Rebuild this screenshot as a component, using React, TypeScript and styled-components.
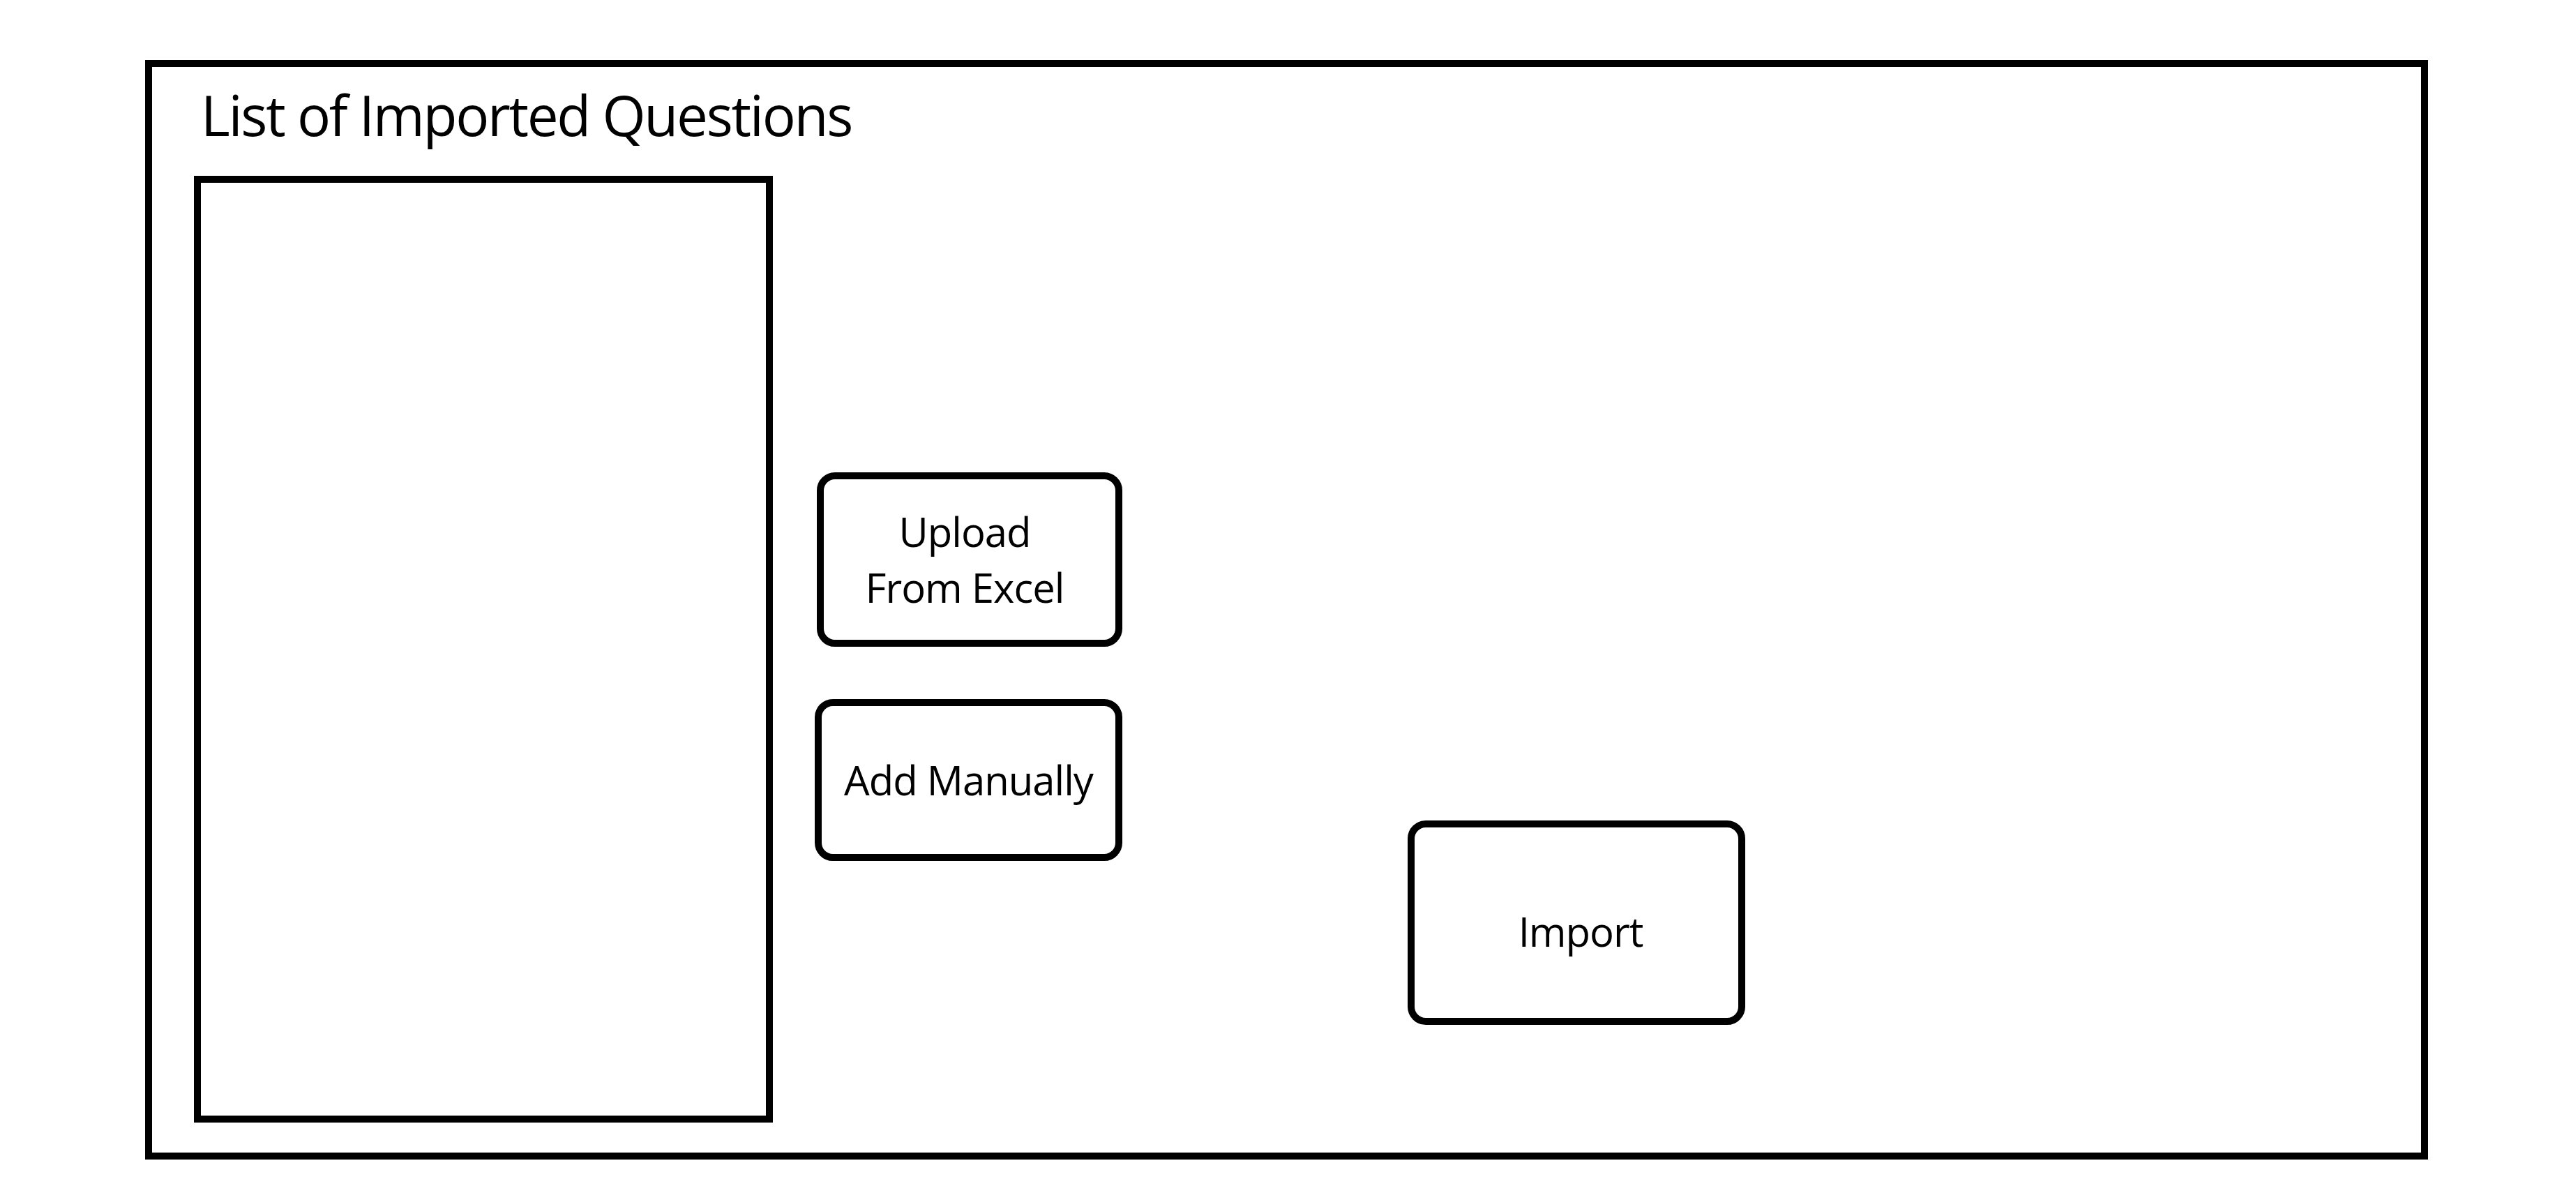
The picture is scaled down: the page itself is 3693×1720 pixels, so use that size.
import React from 'react';
import styled, { createGlobalStyle } from 'styled-components';

const GlobalStyle = createGlobalStyle`
    html, body {
        margin: 0;
        padding: 0;
        background: #fff;
    }
    body {
        font-family: "Open Sans", "Noto Sans", sans-serif;
        color: #000;
    }
`;

const Page = styled.div`
    padding: 86px 0 0 208px;
`;

const Frame = styled.section`
    box-sizing: border-box;
    width: 3273px;
    height: 1576px;
    border: 10px solid #000;
    padding: 28px 0 0 60px;
    display: flex;
    flex-direction: column;
`;

const Title = styled.h1`
    margin: 0 0 48px 10px;
    font-size: 80px;
    line-height: 80px;
    font-weight: 400;
    letter-spacing: -2.3px;
`;

const Body = styled.div`
    display: flex;
    align-items: flex-start;
`;

const QuestionList = styled.div`
    box-sizing: border-box;
    width: 830px;
    height: 1357px;
    border: 10px solid #000;
`;

const Actions = styled.div`
    display: flex;
    flex-direction: column;
    align-items: flex-end;
    gap: 75px;
    margin: 425px 0 0 60px;
`;

const Button = styled.button<{ $w: number; $h: number }>`
    box-sizing: border-box;
    width: ${p => p.$w}px;
    height: ${p => p.$h}px;
    border: 10px solid #000;
    border-radius: 26px;
    background: #fff;
    font-family: "Open Sans", "Noto Sans", sans-serif;
    font-size: 58px;
    line-height: 80px;
    color: #000;
    letter-spacing: -1px;
    padding: 0;
    display: flex;
    align-items: center;
    justify-content: center;
    text-align: center;
`;

const UploadButton = styled(Button)`
    padding-right: 14px;
`;

const ImportButton = styled(Button)`
    margin: 924px 0 0 409px;
    padding: 24px 0 0 12px;
`;

export default function App() {
    return (
        <>
            <GlobalStyle />
            <Page>
                <Frame>
                    <Title>List of Imported Questions</Title>
                    <Body>
                        <QuestionList />
                        <Actions>
                            <UploadButton $w={438} $h={250}>Upload<br />From Excel</UploadButton>
                            <Button $w={441} $h={232}>Add Manually</Button>
                        </Actions>
                        <ImportButton $w={484} $h={293}>Import</ImportButton>
                    </Body>
                </Frame>
            </Page>
        </>
    );
}
